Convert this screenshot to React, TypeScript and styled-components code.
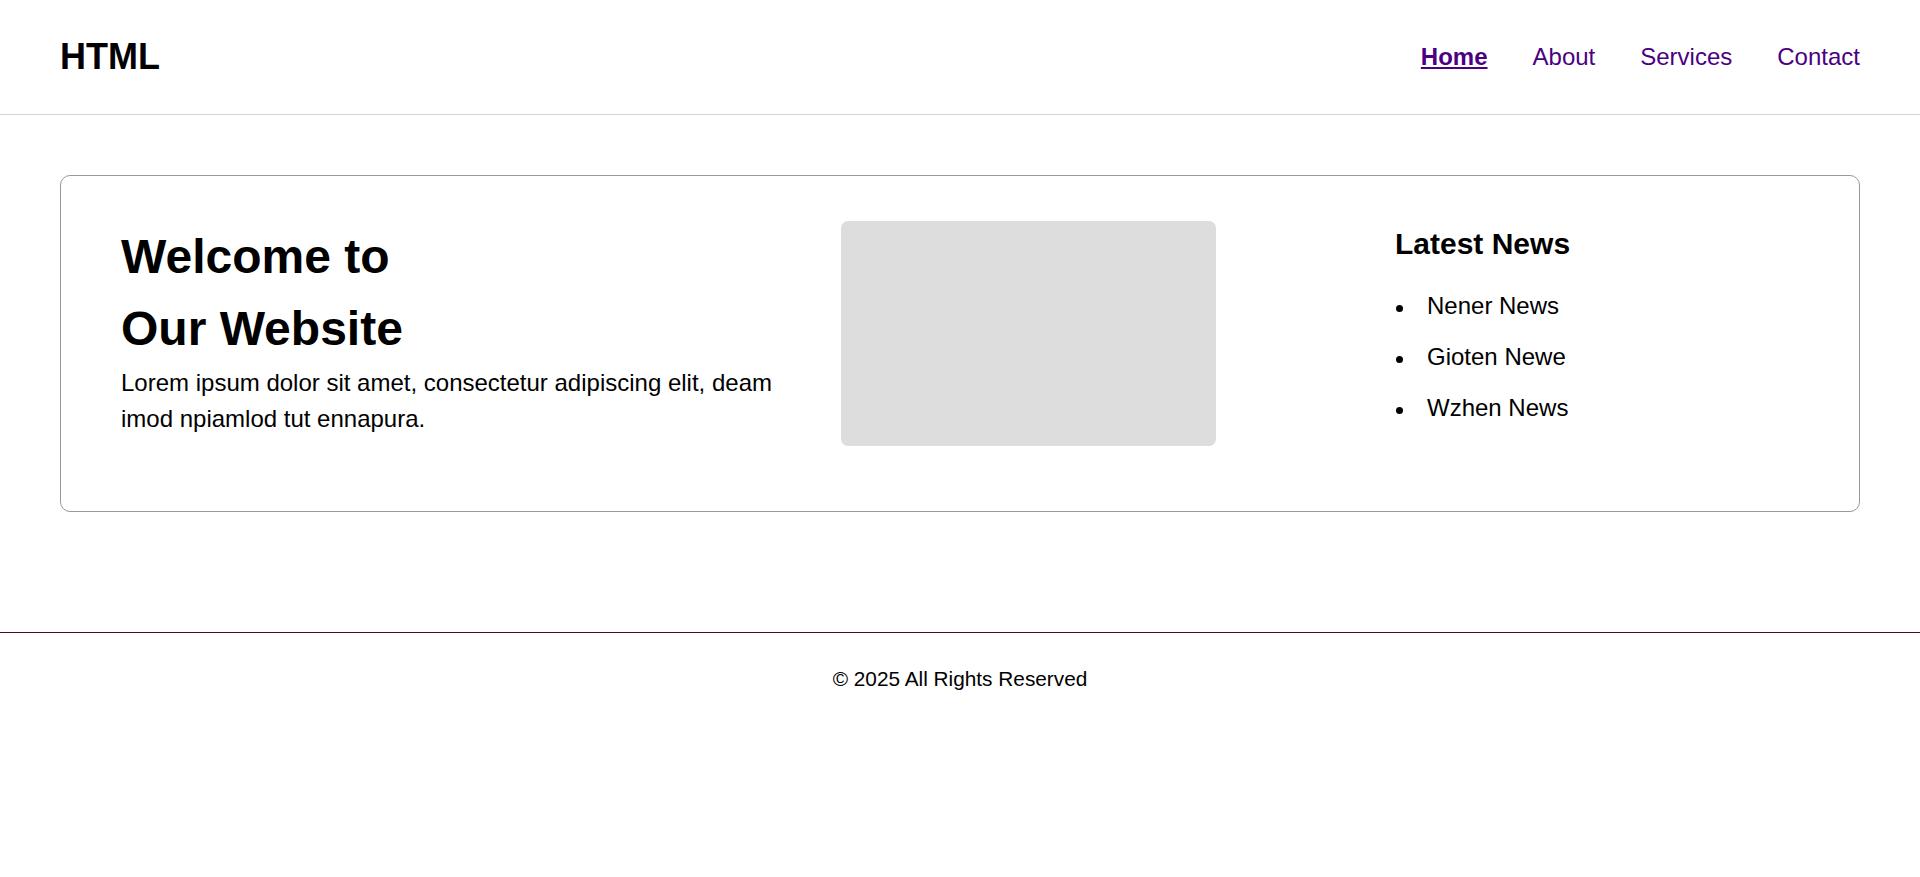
import React from 'react';
import styled, { createGlobalStyle } from 'styled-components';

const GlobalStyle = createGlobalStyle`
    body {
        margin: 0;
        background: #fff;
        color: #000;
        font-family: "Liberation Sans", Arial, sans-serif;
        line-height: 1.5;
    }
`;

const navLinks = ['Home', 'About', 'Services', 'Contact'];
const news = ['Nener News', 'Gioten Newe', 'Wzhen News'];

const App: React.FC = () => {
    return (
        <>
            <GlobalStyle />
            <Header>
                <Logo>HTML</Logo>
                <Nav>
                    {navLinks.map((name, i) => (
                        <NavLink key={name} href="#" $active={i === 0}>
                            {name}
                        </NavLink>
                    ))}
                </Nav>
            </Header>
            <Main>
                <Card>
                    <Intro>
                        <Title>
                            Welcome to
                            <br />
                            Our Website
                        </Title>
                        <Text>
                            Lorem ipsum dolor sit amet, consectetur adipiscing elit, deam imod npiamlod tut ennapura.
                        </Text>
                    </Intro>
                    <Media>
                        <Placeholder />
                    </Media>
                    <News>
                        <NewsTitle>Latest News</NewsTitle>
                        <NewsList>
                            {news.map((item) => (
                                <NewsItem key={item}>{item}</NewsItem>
                            ))}
                        </NewsList>
                    </News>
                </Card>
            </Main>
            <Footer>© 2025 All Rights Reserved</Footer>
        </>
    );
};

const Header = styled.header`
    display: flex;
    justify-content: space-between;
    align-items: center;
    height: 114px;
    padding: 0 60px;
    border-bottom: 1px solid #d4d4d4;
`;
const Logo = styled.h1`
    margin: 0;
    font-size: 36px;
    font-weight: bold;
`;
const Nav = styled.nav`
    display: flex;
    gap: 45px;
`;
const NavLink = styled.a<{ $active?: boolean }>`
    font-size: 24px;
    color: #4b0082;
    font-weight: ${({ $active }) => ($active ? 'bold' : 'normal')};
    text-decoration: ${({ $active }) => ($active ? 'underline' : 'none')};
`;
const Main = styled.main`
    padding: 60px 60px 120px;
`;
const Card = styled.section`
    display: grid;
    grid-template-columns: 680px 514px 1fr;
    column-gap: 40px;
    align-items: start;
    padding: 45px 60px 65px;
    border: 1px solid #999;
    border-radius: 10px;
`;
const Intro = styled.div``;
const Title = styled.h2`
    margin: 0;
    font-size: 48px;
    font-weight: bold;
`;
const Text = styled.p`
    margin: 0;
    font-size: 24px;
`;
const Media = styled.div``;
const Placeholder = styled.div`
    width: 375px;
    height: 225px;
    background: #dddddd;
    border-radius: 7px;
`;
const News = styled.aside``;
const NewsTitle = styled.h3`
    margin: 0 0 22px;
    font-size: 30px;
    font-weight: bold;
`;
const NewsList = styled.ul`
    margin: 0;
    padding: 0;
    list-style: none;
`;
const NewsItem = styled.li`
    display: flex;
    font-size: 24px;
    margin-bottom: 15px;

    &::before {
        content: "";
        flex: 0 0 7px;
        height: 7px;
        margin: 17px 24px 0 1px;
        border-radius: 50%;
        background: #000;
    }
`;
const Footer = styled.footer`
    padding: 30px;
    border-top: 1px solid #4a0e1a;
    text-align: center;
    font-size: 20.8px;
`;

export default App;
